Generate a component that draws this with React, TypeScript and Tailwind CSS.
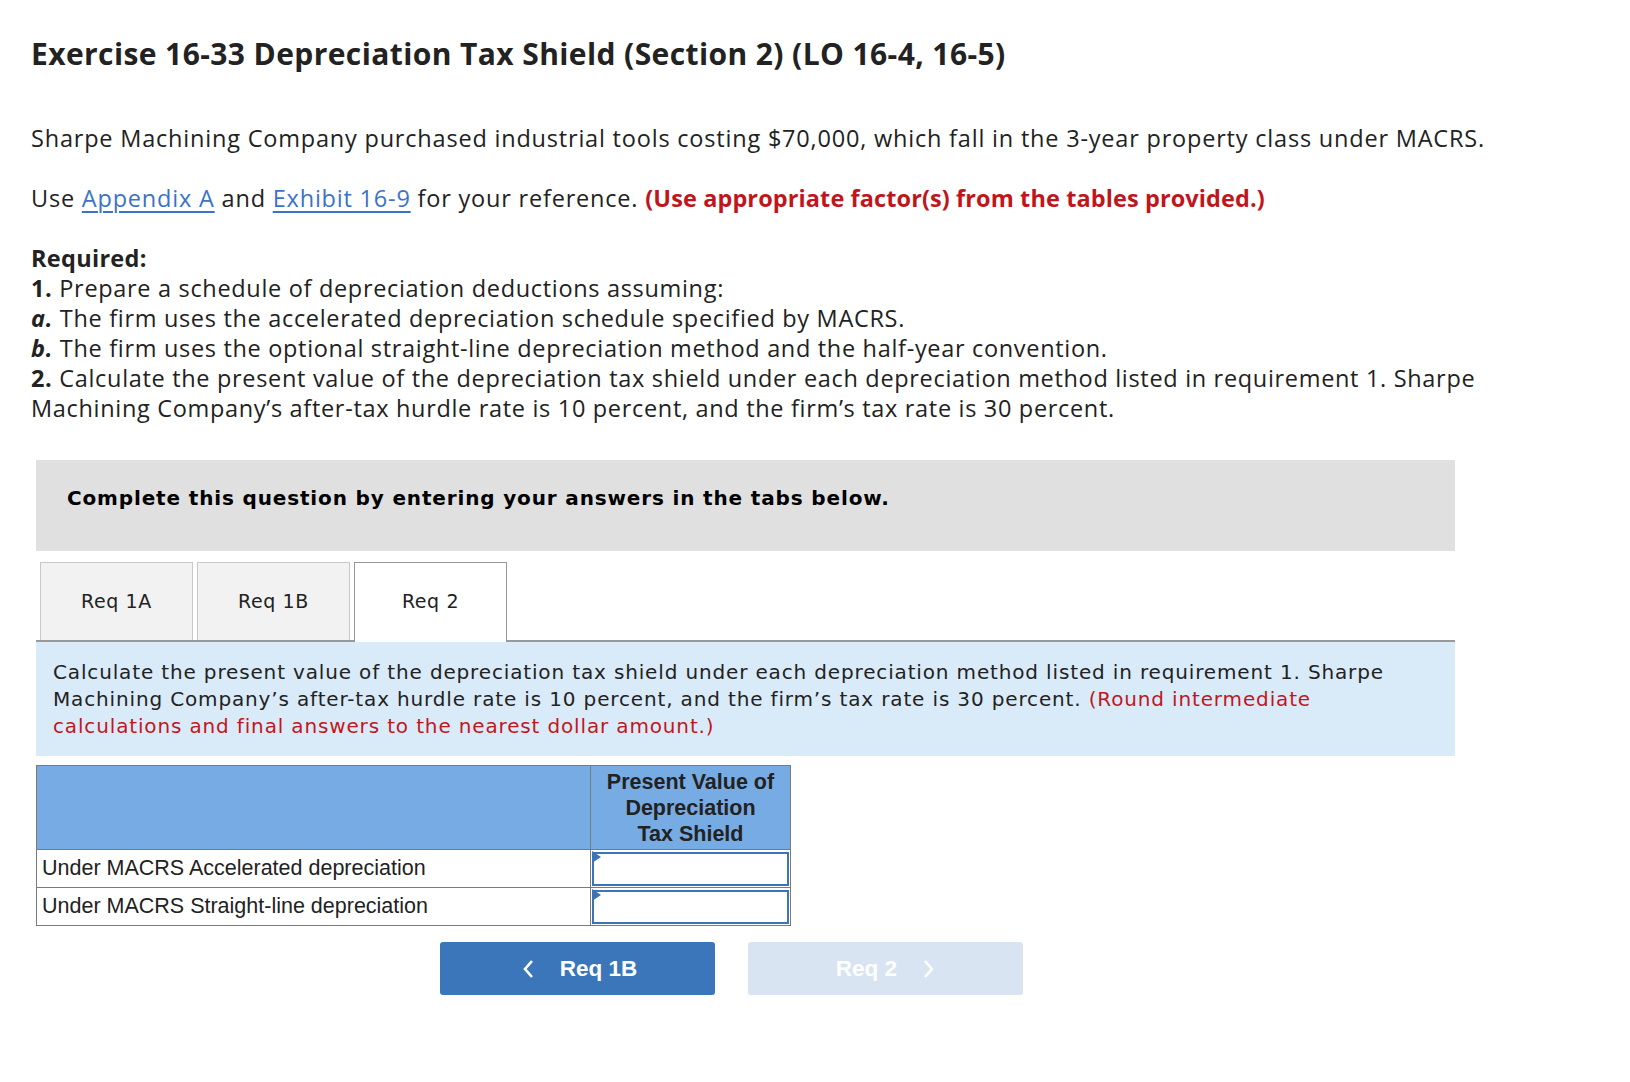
import React from 'react';

const body = { fontFamily: '"Open Sans", Lato, sans-serif' };
const verdana = { fontFamily: '"DejaVu Sans", Verdana, sans-serif' };
const arial = { fontFamily: '"Liberation Sans", Arial, sans-serif' };

const tabs = ['Req 1A', 'Req 1B', 'Req 2'];
const rows = ['Under MACRS Accelerated depreciation', 'Under MACRS Straight-line depreciation'];

export default function App() {
  return (
    <div className="min-h-[1082px] bg-white text-[#222]">
      <div className="pl-[31px] pr-[100px] pt-[36px]" style={body}>
        <h1 className="text-[30px] font-bold leading-[36px] tracking-[0.4px]">
          Exercise 16-33 Depreciation Tax Shield (Section 2) (LO 16-4, 16-5)
        </h1>

        <p className="mt-[51px] text-[23.5px] leading-[30px] tracking-[0.8px]">
          Sharpe Machining Company purchased industrial tools costing $70,000, which fall in the 3-year property class under MACRS.
        </p>

        <p className="mt-[30px] text-[23.5px] leading-[30px] tracking-[0.8px]">
          Use{' '}
          <a className="text-[#3b73c8] underline decoration-2 underline-offset-4">Appendix A</a> and{' '}
          <a className="text-[#3b73c8] underline decoration-2 underline-offset-4">Exhibit 16-9</a> for your reference.{' '}
          <span className="font-bold tracking-[0.1px] text-[#c0161b]">(Use appropriate factor(s) from the tables provided.)</span>
        </p>

        <div className="mt-[30px] text-[23.5px] leading-[30px] tracking-[0.68px]">
          <div className="font-bold tracking-[0.3px]">Required:</div>
          <div><b>1.</b> Prepare a schedule of depreciation deductions assuming:</div>
          <div><b><i>a.</i></b> The firm uses the accelerated depreciation schedule specified by MACRS.</div>
          <div><b><i>b.</i></b> The firm uses the optional straight-line depreciation method and the half-year convention.</div>
          <div>
            <b>2.</b> Calculate the present value of the depreciation tax shield under each depreciation method listed in requirement 1. Sharpe Machining Company’s after-tax hurdle rate is 10 percent, and the firm’s tax rate is 30 percent.
          </div>
        </div>
      </div>

      <div className="ml-[36px] mt-[37px] w-[1419px]">
        <div className="h-[91px] bg-[#e0e0e0] pl-[31px] pt-[23px]" style={verdana}>
          <div className="text-[20px] font-bold leading-[30px] tracking-[0.85px] text-black">
            Complete this question by entering your answers in the tabs below.
          </div>
        </div>

        <div className="mt-[11px] flex gap-[4px] border-b-2 border-[#999] pl-[4px]" style={verdana}>
          {tabs.map((t, i) => (
            <div
              key={t}
              className={
                i === 2
                  ? 'mb-[-2px] flex h-[80px] w-[153px] items-center justify-center border border-b-0 border-[#999] bg-white pb-[2px] text-[19px] tracking-[0.6px] text-[#222]'
                  : 'flex h-[78px] w-[153px] items-center justify-center border border-b-0 border-[#c8c8c8] bg-[#f2f2f2] text-[19px] tracking-[0.6px] text-[#222]'
              }
            >
              {t}
            </div>
          ))}
        </div>

        <div className="h-[114px] bg-[#d9ebf9] pl-[17px] pr-[40px] pt-[17px] text-[20px] leading-[27px] tracking-[0.85px] text-[#222]" style={verdana}>
          Calculate the present value of the depreciation tax shield under each depreciation method listed in requirement 1. Sharpe Machining Company’s after-tax hurdle rate is 10 percent, and the firm’s tax rate is 30 percent.{' '}
          <span className="text-[#c1171c]">(Round intermediate calculations and final answers to the nearest dollar amount.)</span>
        </div>

        <table className="mt-[9px] border-collapse" style={arial}>
          <thead>
            <tr>
              <th className="h-[84px] w-[554px] border border-[#7a7a7a] bg-[#77abe3]" />
              <th className="w-[200px] border border-[#7a7a7a] bg-[#77abe3] px-1 text-center text-[21.5px] font-bold leading-[26px] text-[#222]">
                Present Value of
                <br />
                Depreciation
                <br />
                Tax Shield
              </th>
            </tr>
          </thead>
          <tbody>
            {rows.map((r) => (
              <tr key={r}>
                <td className="h-[38px] border border-[#7a7a7a] pl-[5px] text-[21.5px] text-[#222]">{r}</td>
                <td className="relative border border-[#7a7a7a] p-0">
                  <div className="m-[1px] h-[34px] border-2 border-[#3b74b8] bg-white" />
                  <svg className="absolute left-[1px] top-[1px]" width="10" height="14" viewBox="0 0 10 14">
                    <path d="M0 0 L9 6 L0 12 Z" fill="#3b74b8" />
                  </svg>
                </td>
              </tr>
            ))}
          </tbody>
        </table>

        <div className="mt-[16px] flex gap-[33px] pl-[404px]" style={arial}>
          <button className="flex h-[53px] w-[275px] items-center justify-center gap-[26px] rounded-[3px] bg-[#3a76b9] pl-[4px] text-[22.5px] font-bold text-white">
            <svg width="12" height="20" viewBox="0 0 12 20">
              <path d="M10 2 L3 10 L10 18" stroke="white" strokeWidth="2.6" fill="none" />
            </svg>
            <span>Req 1B</span>
          </button>
          <button className="flex h-[53px] w-[275px] items-center justify-center gap-[26px] rounded-[3px] bg-[#d8e4f2] text-[22.5px] font-bold text-white">
            <span>Req 2</span>
            <svg width="12" height="20" viewBox="0 0 12 20">
              <path d="M2 2 L9 10 L2 18" stroke="white" strokeWidth="2.6" fill="none" />
            </svg>
          </button>
        </div>
      </div>
    </div>
  );
}
